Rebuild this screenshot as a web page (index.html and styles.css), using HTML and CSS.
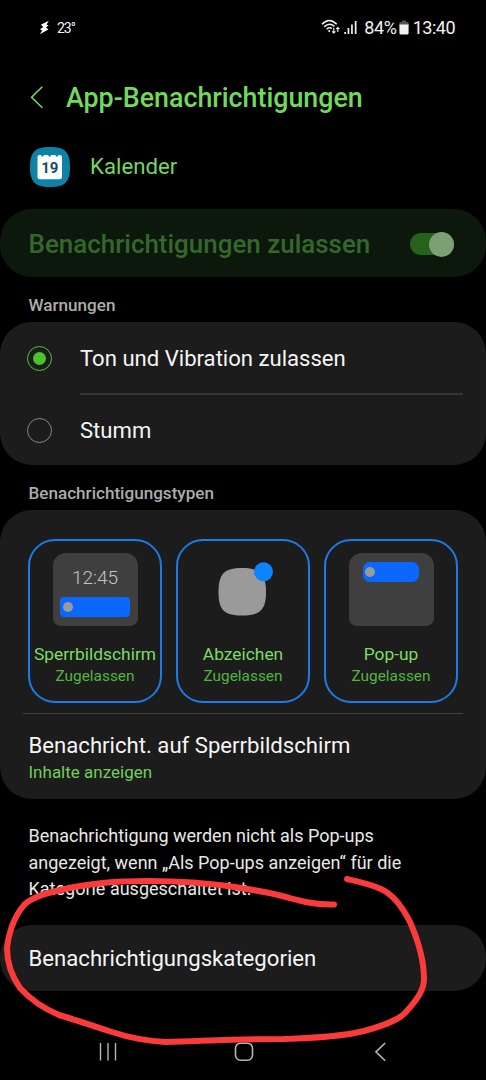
FILE: index.html
```
<!DOCTYPE html>
<html lang="de">
<head>
  <meta charset="UTF-8">
  <meta name="viewport" content="width=device-width, initial-scale=1.0">
  <title>App-Benachrichtigungen</title>
  <link rel="stylesheet" href="styles.css">
</head>
<body>

  <div class="phone">
    <div class="statusbar">
      <svg class="bolt" width="12" height="15" viewBox="0 0 12 15"><path d="M9.8 0.8 L1.8 4.8 L4.3 7 L1 9.2 L3.2 10.4 L0.8 14.2 L9.4 9.6 L7 7.6 L9.6 5.6 L7.6 4.5 Z" fill="#fff"/></svg>
      <span class="temp">23°</span>
      <div class="status-right">
        <svg width="20" height="16" viewBox="0 0 20 16" fill="none" stroke="#f2f2f2" stroke-width="1.5">
          <path d="M1 5.2 Q8.3 -2.4 15.7 5.2"/>
          <path d="M3.3 7.9 Q8.3 2.9 13.4 7.4"/>
          <path d="M5.6 10.3 Q8.3 7.8 10.8 9.6"/>
          <circle cx="8.2" cy="12" r="1" fill="#f2f2f2" stroke="none"/>
          <path d="M12.8 8.8 V14 M11.2 12.3 L12.8 14 L14.4 12.3 M16.8 13 V8.6 M15.2 10.2 L16.8 8.5 L18.4 10.2" stroke-width="1.1"/>
        </svg>
        <svg class="signal" width="14" height="15" viewBox="0 0 14 15" fill="#f2f2f2">
          <rect x="0.3" y="12" width="1.7" height="2"/>
          <rect x="3.6" y="8" width="1.7" height="6"/>
          <rect x="7.1" y="4.5" width="1.7" height="9.5"/>
          <rect x="10.8" y="1" width="1.7" height="13"/>
        </svg>
        <span class="percent">84%</span>
        <svg class="battery" width="10" height="15" viewBox="0 0 10 15">
          <path d="M3 0.5 H7 V2 H8.5 Q9.6 2 9.6 3.2 V6 H0.4 V3.2 Q0.4 2 1.5 2 H3 Z" fill="#555"/>
          <path d="M0.4 4.5 H9.6 V13 Q9.6 14.5 8.2 14.5 H1.8 Q0.4 14.5 0.4 13 Z" fill="#f2f2f2"/>
        </svg>
        <span class="clock">13:40</span>
      </div>
    </div>

    <header class="header">
      <svg width="14" height="24" viewBox="0 0 14 24" fill="none" stroke="#71d95c" stroke-width="1.6"><path d="M12.3 0.7 L1.6 11.2 L12.3 21.7"/></svg>
      <h1>App-Benachrichtigungen</h1>
    </header>

    <div class="app">
      <svg width="40" height="40" viewBox="0 0 40 40">
        <path d="M20 0 C35 0 40 5 40 20 C40 35 35 40 20 40 C5 40 0 35 0 20 C0 5 5 0 20 0 Z" fill="#0c83a4"/>
        <path d="M9.5 8 H11 Q12.5 11.4 14 8 H18 Q19.7 11.4 21.3 8 H25.3 Q27 11.4 28.6 8 H29.8 Q32 8 32 10 V30 Q32 32.2 29.8 32.2 H9.8 Q7.5 32.2 7.5 30 V10 Q7.5 8 9.5 8 Z" fill="#fff"/>
        <text class="day" x="19.8" y="26" text-anchor="middle">19</text>
      </svg>
      <span>Kalender</span>
    </div>

    <div class="allow">
      <span>Benachrichtigungen zulassen</span>
      <div class="toggle"><div class="knob"></div></div>
    </div>

    <h2>Warnungen</h2>
    <div class="card alerts">
      <div class="option">
        <span class="radio checked"></span>
        <span class="name">Ton und Vibration zulassen</span>
      </div>
      <div class="option">
        <span class="radio"></span>
        <span class="name">Stumm</span>
      </div>
    </div>

    <h2>Benachrichtigungstypen</h2>
    <div class="card types">
      <div class="tiles">
        <div class="tile">
          <div class="preview lock">
            <span class="time">12:45</span>
            <div class="bar"><i></i></div>
          </div>
          <p class="tile-name">Sperrbildschirm</p>
          <p class="tile-state">Zugelassen</p>
        </div>
        <div class="tile">
          <div class="preview badge">
            <svg width="56" height="54" viewBox="0 0 56 54">
              <path d="M24 6 C42 6 48 12 48 30 C48 48 42 53.5 24 53.5 C6 53.5 0.5 48 0.5 30 C0.5 12 6 6 24 6 Z" fill="#9a9a9a"/>
              <circle cx="45.5" cy="9.7" r="9.5" fill="#0a84ff"/>
            </svg>
          </div>
          <p class="tile-name">Abzeichen</p>
          <p class="tile-state">Zugelassen</p>
        </div>
        <div class="tile">
          <div class="preview popup">
            <div class="bar"><i></i></div>
          </div>
          <p class="tile-name">Pop-up</p>
          <p class="tile-state">Zugelassen</p>
        </div>
      </div>
      <div class="lockscreen">
        <p class="name">Benachricht. auf Sperrbildschirm</p>
        <p class="sub">Inhalte anzeigen</p>
      </div>
    </div>

    <p class="hint">Benachrichtigung werden nicht als Pop-ups<br>angezeigt, wenn „Als Pop-ups anzeigen“ für die<br>Kategorie ausgeschaltet ist.</p>

    <div class="card categories">
      <span class="name">Benachrichtigungskategorien</span>
    </div>

    <nav class="navbar">
      <svg width="20" height="20" viewBox="0 0 20 20" stroke="#b4b4b4" stroke-width="1.4"><path d="M2.5 1 V18.5 M10 1 V18.5 M17.5 1 V18.5"/></svg>
      <svg width="20" height="20" viewBox="0 0 20 20" fill="none" stroke="#b4b4b4" stroke-width="1.6"><rect x="1.5" y="1.2" width="17" height="17" rx="5"/></svg>
      <svg width="20" height="20" viewBox="0 0 20 20" fill="none" stroke="#b4b4b4" stroke-width="1.6"><path d="M15.2 1 L5.9 9.8 L15.2 18.8"/></svg>
    </nav>

    <!-- red marker -->
    <svg class="marker" width="486" height="220" viewBox="0 860 486 220" fill="none" stroke="#fb3b3b" stroke-width="6" stroke-linecap="round" stroke-linejoin="round">
      <path d="M334 904.5 C312 905 298 900 282 896 C264 891 252 890 235 887 C208 883 175 881 148 881 C115 881 98 883 74 887 C50 892 34 896 25 904 C13 917 8 936 7 948 C7 963 13 978 20 988 C31 1000 47 1010 59 1015 C76 1020 94 1026 112 1032 C133 1039 147 1041 166 1042 C204 1041 238 1039 284 1039 C319 1038 344 1036 364 1031 C382 1026 397 1021 405 1013 C417 1000 424 990 424 979 C424 959 417 938 410 922 C402 906 392 894 381 889 C370 884 360 882 347 879"/>
    </svg>
  </div>

</body>
</html>
```
FILE: styles.css
```
body {
  margin: 0;
  background-color: #000;
  color: #f5f5f5;
  font-family: Roboto, sans-serif;
}

h1, h2, p {
  margin: 0;
}

svg {
  display: block;
  flex-shrink: 0;
}

.phone {
  position: relative;
  width: 486px;
  height: 1080px;
  overflow: hidden;
}

.statusbar {
  display: flex;
  align-items: center;
  height: 54px;
  padding: 0 31px 0 39px;
  color: #f2f2f2;
}

.temp {
  margin-left: 6px;
  padding-top: 2px;
  font-size: 14px;
  letter-spacing: -1px;
}

.status-right {
  display: flex;
  align-items: center;
  margin-left: auto;
  font-size: 18px;
}

.signal {
  margin-left: 3px;
}

.percent {
  margin-left: 6px;
  letter-spacing: -0.3px;
}

.battery {
  margin: 0 4px 0 2px;
}

.clock {
  letter-spacing: -0.5px;
}

.header {
  display: flex;
  align-items: center;
  gap: 22px;
  height: 87px;
  padding-left: 30px;
  color: #71d95c;
}

h1 {
  font-size: 26.8px;
  font-weight: 500;
}

.app {
  display: flex;
  align-items: center;
  gap: 20px;
  height: 52px;
  padding-left: 30px;
  color: #71d95c;
  font-size: 22.2px;
}

.app span {
  padding-bottom: 2px;
}

.day {
  fill: #124e66;
  font-size: 15px;
  font-weight: 700;
}

.allow {
  display: flex;
  align-items: center;
  justify-content: space-between;
  box-sizing: border-box;
  height: 68px;
  margin-top: 16px;
  padding: 2px 32px 0 28.5px;
  border-radius: 32px;
  background-color: #0d180c;
  color: #34682a;
  font-size: 25.95px;
  font-weight: 500;
}

.toggle {
  display: flex;
  align-items: center;
  justify-content: flex-end;
  width: 44px;
  height: 22px;
  border-radius: 11px;
  background-color: #25631a;
}

.knob {
  width: 25px;
  height: 25px;
  flex-shrink: 0;
  border-radius: 50%;
  background-color: #7d9f75;
}

h2 {
  height: 45px;
  padding-left: 28.5px;
  color: #acacac;
  font-size: 17.1px;
  font-weight: 500;
  line-height: 57px;
}

.card {
  box-sizing: border-box;
  border-radius: 32px;
  background-color: #1c1c1c;
}

.name {
  font-size: 22.15px;
}

.alerts {
  height: 143px;
  padding-top: 1px;
}

.option {
  display: flex;
  align-items: center;
  height: 70px;
  margin-right: 23px;
}

.option + .option {
  height: 72px;
}

.option .name {
  display: flex;
  align-items: center;
  flex: 1;
  height: 100%;
  box-sizing: border-box;
  margin-left: 28px;
  font-size: 22.1px;
}

.option + .option .name {
  border-top: 2px solid #363636;
}

.radio {
  display: flex;
  align-items: center;
  justify-content: center;
  box-sizing: border-box;
  width: 25px;
  height: 25px;
  margin-left: 27px;
  border: 1px solid #858585;
  border-radius: 50%;
}

.option + .option .radio {
  margin-top: 2px;
}

.checked {
  border: 1.5px solid #4cc32d;
}

.checked::after {
  content: "";
  width: 13px;
  height: 13px;
  border-radius: 50%;
  background-color: #4cc32d;
}

.types {
  height: 289px;
  padding: 28.5px 28px 0;
}

.tiles {
  display: grid;
  grid-template-columns: repeat(3, 134px);
  gap: 14px;
}

.tile {
  box-sizing: border-box;
  height: 164px;
  padding-top: 12px;
  border: 2px solid #1b7be8;
  border-radius: 27px;
  text-align: center;
}

.preview {
  display: flex;
  flex-direction: column;
  align-items: center;
  box-sizing: border-box;
  width: 85px;
  height: 73px;
  margin: 0 auto;
  border-radius: 13px 13px 8px 8px;
  background-color: #3f3f3f;
}

.lock {
  padding-top: 13px;
}

.time {
  height: 31px;
  color: #c4c4c4;
  font-size: 19px;
  font-weight: 300;
}

.bar {
  display: flex;
  align-items: center;
  box-sizing: border-box;
  width: 70px;
  height: 20px;
  padding-left: 3px;
  border-radius: 4px;
  background-color: #0a68ff;
}

.bar i {
  width: 10px;
  height: 10px;
  border-radius: 50%;
  background-color: #9a9a9a;
}

.badge {
  align-items: flex-start;
  padding: 9px 0 0 17px;
  background: none;
}

.popup {
  padding-top: 9px;
}

.popup .bar {
  width: 56px;
  padding-left: 2px;
  border-radius: 7px;
}

.tile-name {
  margin: 17px -5px 0;
  color: #7bdc66;
  font-size: 17.4px;
  line-height: 22px;
  white-space: nowrap;
}

.tile-state {
  color: #53b53d;
  font-size: 15.4px;
  line-height: 22px;
}

.lockscreen {
  margin: 10px -5px 0;
  padding: 18px 5.5px 0;
  border-top: 1px solid #424242;
}

.lockscreen .name {
  line-height: 27px;
}

.sub {
  color: #6fcf59;
  font-size: 17px;
  line-height: 26px;
}

.hint {
  padding: 24px 28.5px 0;
  color: #e8e8e8;
  font-size: 18px;
  line-height: 26.5px;
  white-space: nowrap;
}

.categories {
  display: flex;
  align-items: center;
  height: 66px;
  margin-top: 22px;
  padding: 1px 0 0 28.5px;
}

.navbar {
  display: flex;
  justify-content: space-between;
  padding: 51px 96px 0 98px;
}

/* lies over the last card and the hint text */
.marker {
  position: absolute;
  left: 0;
  top: 860px;
}
```
